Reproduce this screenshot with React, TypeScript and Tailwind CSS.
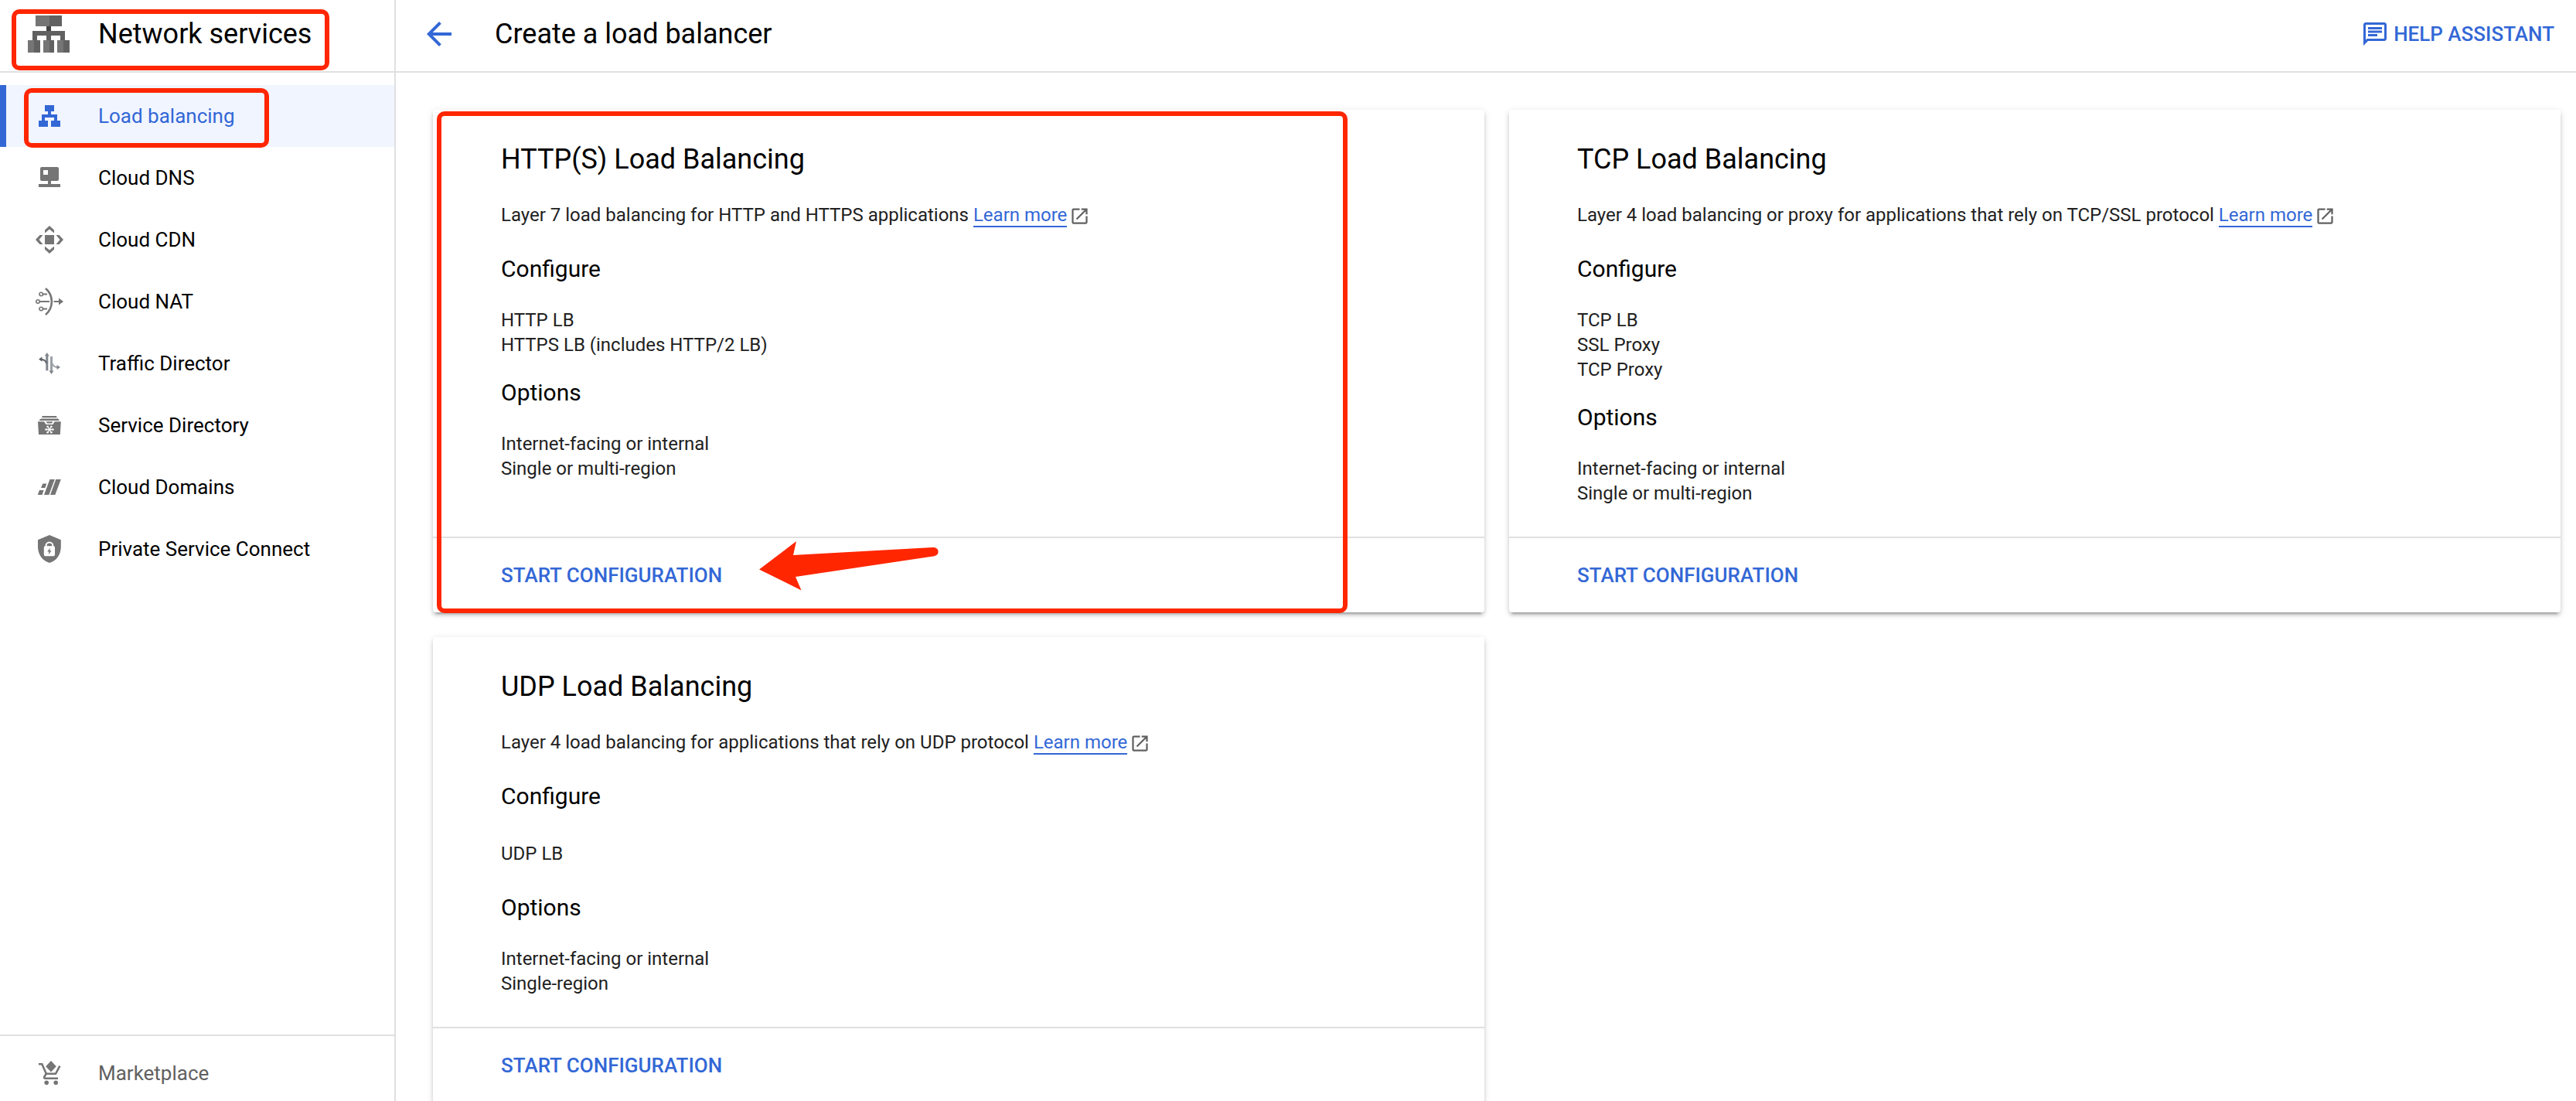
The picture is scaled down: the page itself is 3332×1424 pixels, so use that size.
import type { ReactNode } from "react";
import { MdArrowBack, MdOpenInNew } from "react-icons/md";

function GreyIcon({ children }: { children: ReactNode }) {
  return (
    <svg viewBox="0 0 36 36" className="size-9 shrink-0" fill="currentColor" aria-hidden="true">
      {children}
    </svg>
  );
}

function NetworkServicesLogo() {
  return (
    <svg viewBox="0 0 54 48" className="h-12 w-[54px] shrink-0" shapeRendering="crispEdges" aria-hidden="true">
      <path fill="#616161" d="M6 20H48V32H42V26H30V32H24V26H12V32H6Z" />
      <path fill="#424242" d="M24 14H30V20H24Z" />
      <path fill="#757575" d="M10 0H28V14H10ZM0 32H8V48H0ZM20 32H28V48H20ZM38 32H46V48H38Z" />
      <path fill="#616161" d="M28 0H44V14H28ZM8 32H16V48H8ZM28 32H34V48H28ZM46 32H54V48H46Z" />
    </svg>
  );
}

const icons = {
  loadBalancing: (
    <GreyIcon>
      <path shapeRendering="crispEdges" d="M12 4H24V12H20V16H28V24H32V32H20V24H24V20H12V24H16V32H4V24H8V16H16V12H12Z" />
    </GreyIcon>
  ),
  dns: (
    <GreyIcon>
      <path
        fillRule="evenodd"
        d="M8 4H28A2 2 0 0 1 30 6V20A2 2 0 0 1 28 22H20V26H32V30H4V26H16V22H8A2 2 0 0 1 6 20V6A2 2 0 0 1 8 4ZM10 8V14H16V8Z"
      />
    </GreyIcon>
  ),
  cdn: (
    <GreyIcon>
      <path d="M12 12H24V24H12Z" />
      <path d="M18 0L24 5.5V9.5L18 4.5L12 9.5V5.5Z" />
      <path d="M18 36L24 30.5V26.5L18 31.5L12 26.5V30.5Z" />
      <path d="M0 18L5.5 12H9.5L4.5 18L9.5 24H5.5Z" />
      <path d="M36 18L30.5 12H26.5L31.5 18L26.5 24H30.5Z" />
    </GreyIcon>
  ),
  nat: (
    <GreyIcon>
      <g fill="none" stroke="currentColor" strokeWidth="2">
        <path strokeWidth="2.6" d="M13 1C23.5 10 23.5 26 13 35" />
        <circle cx="7.2" cy="8.5" r="2.2" strokeWidth="1.6" />
        <circle cx="3" cy="18" r="2.2" strokeWidth="1.6" />
        <circle cx="7.2" cy="27.5" r="2.2" strokeWidth="1.6" />
        <path d="M9.5 8.5H15M5.5 18H18M9.5 27.5H15M23.5 18H31" />
      </g>
      <path d="M30 13.6L36 18L30 22.4Z" />
    </GreyIcon>
  ),
  traffic: (
    <GreyIcon>
      <g fill="none" strokeWidth="3">
        <path stroke="#9aa0a6" d="M20.5 9V28" />
        <path stroke="#9aa0a6" strokeWidth="2" d="M21 17C22 21 25 23 29 23" />
        <path stroke="#80868b" d="M14.8 8V27.3" />
        <path stroke="#5f6368" strokeWidth="2" d="M14 18C13.5 15 11 13 7 13" />
      </g>
      <path fill="#80868b" d="M14.8 4L17.8 8.5H11.8ZM20.5 32L17.5 27.5H23.5ZM32 23L27.5 26V20Z" />
      <path fill="#5f6368" d="M4 12.5L8.5 9.5V15.8Z" />
    </GreyIcon>
  ),
  directory: (
    <GreyIcon>
      <path d="M8.5 6H27.3V8H8.5Z" />
      <path fillOpacity="0.5" d="M7 8.7H29V10H7Z" />
      <path d="M5.5 10H30L30.5 12H5Z" />
      <path d="M3 13.3H11L13.5 17H22.3L24.8 13.3H32.8L31.8 30H4Z" />
      <path d="M13.5 13.3H22.5L21 15.5H15Z" />
      <g stroke="#fff" strokeWidth="1.3" fill="none">
        <path d="M13.5 23.5H22.5M16 20L20 27M20 20L16 27" />
      </g>
      <g fill="#fff">
        <circle cx="13.6" cy="23.5" r="1.3" />
        <circle cx="22.4" cy="23.5" r="1.3" />
        <circle cx="15.6" cy="19.8" r="1.3" />
        <circle cx="20.4" cy="19.8" r="1.3" />
        <circle cx="15.6" cy="27.2" r="1.3" />
        <circle cx="20.4" cy="27.2" r="1.3" />
      </g>
    </GreyIcon>
  ),
  domains: (
    <GreyIcon>
      <path d="M18.4 8H24.8L17.3 28H11ZM26.3 8H32.8L25.3 28H19ZM9.3 13.5H14.3L12.3 19H7ZM5 22H10.6L8.5 28H2.8Z" />
    </GreyIcon>
  ),
  shield: (
    <GreyIcon>
      <path d="M18 0L32.8 6.3V15C32.8 26 26.5 33.6 18 36C9.5 33.6 3 26 3 15V6.3Z" />
      <path
        fill="#fff"
        fillRule="evenodd"
        d="M12.5 14.2V13.6A5.4 5.2 0 0 1 23.3 13.6V14.2A1.8 1.8 0 0 1 25 16V25.4A1.8 1.8 0 0 1 23.2 27.2H12.6A1.8 1.8 0 0 1 10.8 25.4V16A1.8 1.8 0 0 1 12.5 14.2ZM14.6 14.2H21.2V13.6A3.3 3.2 0 0 0 14.6 13.6Z"
      />
      <path d="M18.8 16.6L15.2 21.4H17.4L16.8 25.2L20.6 20.2H18.3Z" />
    </GreyIcon>
  ),
  cart: (
    <GreyIcon>
      <g fill="none" stroke="currentColor" strokeWidth="2.6">
        <path d="M4 6.3H8.3L13.8 18.8H26L31.4 8.6" />
        <path d="M13.8 18.8L11.2 22.8C10.8 24 11.4 24.8 12.6 24.8H29" />
      </g>
      <circle cx="14.2" cy="30.2" r="2.8" />
      <circle cx="26.2" cy="30.2" r="2.8" />
      <path d="M20 2L26.8 9.3L20 16.6L13.2 9.3Z" />
    </GreyIcon>
  ),
};

const navItems = [
  { label: "Load balancing", icon: icons.loadBalancing, active: true },
  { label: "Cloud DNS", icon: icons.dns },
  { label: "Cloud CDN", icon: icons.cdn },
  { label: "Cloud NAT", icon: icons.nat },
  { label: "Traffic Director", icon: icons.traffic },
  { label: "Service Directory", icon: icons.directory },
  { label: "Cloud Domains", icon: icons.domains },
  { label: "Private Service Connect", icon: icons.shield },
];

function Sidebar() {
  return (
    <aside className="flex w-[512px] shrink-0 flex-col border-r-2 border-[#e0e0e0]">
      <div className="relative flex h-[94px] shrink-0 items-center gap-[37px] border-b-2 border-[#e0e0e0] pb-1 pl-9">
        <NetworkServicesLogo />
        <h2 className="text-4xl whitespace-nowrap">Network services</h2>
        <div className="absolute top-3 left-[15px] h-[79px] w-[411px] rounded-[10px] border-6 border-[#ff2600]" />
      </div>
      <nav className="grow pt-4" aria-label="Network services">
        <ul>
          {navItems.map((item) => (
            <li key={item.label} className="relative">
              <a
                href="#"
                aria-current={item.active ? "page" : undefined}
                className={
                  item.active
                    ? "flex h-20 items-center gap-[45px] border-l-8 border-[#3367d6] bg-[#f0f5ff] pl-[38px] text-[26px] text-[#3367d6]"
                    : "flex h-20 items-center gap-[45px] border-l-8 border-transparent pl-[38px] text-[26px]"
                }
              >
                <span className={item.active ? "text-[#3367d6]" : "text-[#757575]"}>{item.icon}</span>
                {item.label}
              </a>
              {item.active && (
                <div className="absolute top-1 left-[31px] h-[77px] w-[317px] rounded-[10px] border-6 border-[#ff2600]" />
              )}
            </li>
          ))}
        </ul>
      </nav>
      <a
        href="#"
        className="flex h-[86px] shrink-0 items-center gap-[45px] border-t-2 border-[#e0e0e0] pt-3 pl-[46px] text-[26px] text-[#616161]"
      >
        <span className="text-[#757575]">{icons.cart}</span>
        Marketplace
      </a>
    </aside>
  );
}

type CardProps = {
  title: string;
  description: string;
  configure: string[];
  options: string[];
  children?: ReactNode;
};

function Card({ title, description, configure, options, children }: CardProps) {
  return (
    <section className="relative flex flex-col rounded-sm bg-white shadow-[0_6px_2px_-4px_rgba(0,0,0,0.2),0_4px_4px_0_rgba(0,0,0,0.14),0_2px_10px_0_rgba(0,0,0,0.12)]">
      <div className="grow px-[88px] py-10 text-2xl/8 text-[#212121]">
        <h2 className="text-4xl/12 text-black">{title}</h2>
        <p className="mt-8">
          {description}{" "}
          <a href="#" className="border-b-2 border-[#3367d6] text-[#3367d6]">
            Learn more
          </a>
          <MdOpenInNew className="ml-[3px] inline-block size-[27px] align-middle text-[#616161]" aria-hidden="true" />
        </p>
        <h3 className="mt-8 text-[30px]/11 text-black">Configure</h3>
        <ul className={configure.length > 1 ? "mt-7 mb-6" : "mt-9 mb-8"}>
          {configure.map((line) => (
            <li key={line}>{line}</li>
          ))}
        </ul>
        <h3 className="text-[30px]/11 text-black">Options</h3>
        <ul className="mt-7">
          {options.map((line) => (
            <li key={line}>{line}</li>
          ))}
        </ul>
      </div>
      <div className="flex h-[98px] items-center border-t-2 border-[#e0e0e0] px-[88px]">
        <button type="button" className="text-[26px] font-medium text-[#3367d6]">
          START CONFIGURATION
        </button>
      </div>
      {children}
    </section>
  );
}

export default function App() {
  return (
    <div className="flex h-screen overflow-hidden bg-white font-[Roboto,sans-serif] text-black">
      <Sidebar />
      <div className="min-w-0 grow">
        <header className="flex h-[94px] items-center border-b-2 border-[#e0e0e0] pr-7 pb-1 pl-8">
          <button type="button" aria-label="Back" className="text-[#3367d6]">
            <MdArrowBack className="size-12" />
          </button>
          <h1 className="ml-12 grow text-4xl">Create a load balancer</h1>
          <button type="button" className="flex items-center gap-1.5 text-[26px] font-medium text-[#3367d6]">
            <svg viewBox="0 0 24 24" className="size-9" fill="currentColor" aria-hidden="true">
              <path d="M4 4h16v12H5.17L4 17.17V4m0-2c-1.1 0-1.99.9-1.99 2L2 22l4-4h14c1.1 0 2-.9 2-2V4c0-1.1-.9-2-2-2H4zm2 10h8v2H6v-2zm0-3h12v2H6V9zm0-3h12v2H6V6z" />
            </svg>
            HELP ASSISTANT
          </button>
        </header>
        <main className="grid grid-cols-2 gap-8 pt-12 pr-5 pl-12">
          <Card
            title="HTTP(S) Load Balancing"
            description="Layer 7 load balancing for HTTP and HTTPS applications"
            configure={["HTTP LB", "HTTPS LB (includes HTTP/2 LB)"]}
            options={["Internet-facing or internal", "Single or multi-region"]}
          >
            <div className="pointer-events-none absolute top-0.5 right-[177px] -bottom-px left-[5px] rounded-[10px] border-6 border-[#ff2600]" />
            <svg viewBox="0 0 232 64" className="absolute bottom-7 left-[422px] h-16 w-[232px]" fill="#ff2600" aria-hidden="true">
              <path d="M0 36.5L48 0L44 18L224 8C229 8 231.500 10 231.500 13V14C231.500 17 229 19 225 19.500L47 46L54.500 63.500Z" />
            </svg>
          </Card>
          <Card
            title="TCP Load Balancing"
            description="Layer 4 load balancing or proxy for applications that rely on TCP/SSL protocol"
            configure={["TCP LB", "SSL Proxy", "TCP Proxy"]}
            options={["Internet-facing or internal", "Single or multi-region"]}
          />
          <Card
            title="UDP Load Balancing"
            description="Layer 4 load balancing for applications that rely on UDP protocol"
            configure={["UDP LB"]}
            options={["Internet-facing or internal", "Single-region"]}
          />
        </main>
      </div>
    </div>
  );
}
